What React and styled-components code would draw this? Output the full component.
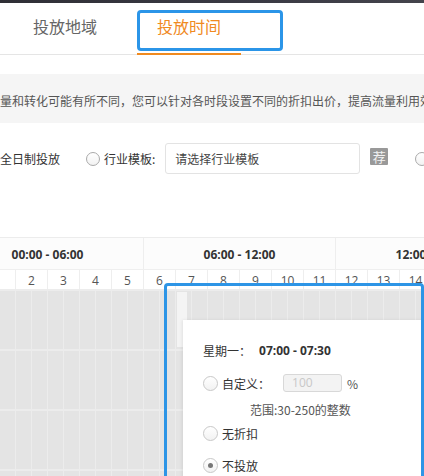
import React from "react";
import styled, { createGlobalStyle } from "styled-components";

const Global = createGlobalStyle`
  html, body { margin: 0; padding: 0; background: #fff; }
  body { width: 424px; height: 476px; overflow: hidden;
    font-family: "Noto Sans CJK SC", "Open Sans", sans-serif; color: #333; }
  * { box-sizing: border-box; }
`;

const Page = styled.div`
  position: relative;
  width: 424px;
  height: 476px;
  overflow: hidden;
`;

const TopStrip = styled.div`
  height: 3px;
  background: linear-gradient(90deg, #2f2f36 0%, #3a3a44 60%, #44444c 100%);
`;

const TabBar = styled.div`
  display: flex;
  align-items: stretch;
  gap: 20px;
  height: 52px;
  padding-left: 13px;
  border-bottom: 1px solid #e5e5e5;
`;

const Tab = styled.div`
  position: relative;
  display: flex;
  align-items: center;
  padding: 0 20px 5px;
  font-size: 16px;
  color: ${(p) => (p.$active ? "#f08a1f" : "#666")};
  border-bottom: 2px solid ${(p) => (p.$active ? "#f08a1f" : "transparent")};
  margin-bottom: -1px;
`;

const FocusRing = styled.div`
  position: absolute;
  left: 0;
  top: 7px;
  width: 146px;
  height: 41px;
  border: 3px solid #2b95e8;
  border-radius: 4px;
  pointer-events: none;
`;

const InfoBand = styled.div`
  margin-top: 19px;
  height: 49px;
  background: #f5f5f5;
  display: flex;
  align-items: center;
  padding-top: 4px;
  font-size: 12px;
  color: #555;
  white-space: nowrap;
  overflow: hidden;
`;

const OptionRow = styled.div`
  margin-top: 20px;
  height: 31px;
  display: flex;
  align-items: center;
  font-size: 12px;
  color: #333;
  white-space: nowrap;
`;

const OptLabel = styled.span`
  margin-right: ${(p) => p.$mr || 0}px;
`;

const Radio = styled.span`
  flex: none;
  position: relative;
  display: inline-block;
  width: ${(p) => (p.$light ? 15 : 14)}px;
  height: ${(p) => (p.$light ? 15 : 14)}px;
  border-radius: 50%;
  border: 1px solid ${(p) => (p.$light ? "#c8c8c8" : "#aaa")};
  background: linear-gradient(#fff, #f2f2f2);
  margin-right: 4px;
  &::after {
    content: "";
    display: ${(p) => (p.$checked ? "block" : "none")};
    position: absolute;
    left: 4px;
    top: 4px;
    width: 5px;
    height: 5px;
    border-radius: 50%;
    background: #777;
  }
`;

const SelectBox = styled.div`
  flex: none;
  width: 195px;
  height: 31px;
  margin-left: 10px;
  border: 1px solid #e3e3e3;
  border-radius: 3px;
  display: flex;
  align-items: center;
  padding-left: 9px;
  font-size: 12px;
  color: #444;
`;

const Badge = styled.span`
  flex: none;
  width: 18px;
  height: 17px;
  margin: -5px 27px 0 10px;
  background: #999;
  color: #f2f2f2;
  font-size: 13px;
  line-height: 17px;
  text-align: center;
  border-radius: 1px;
`;

const TableWrap = styled.div`
  margin-top: 63px;
  overflow: hidden;
  width: 424px;
`;

const Table = styled.div`
  width: 768px;
  margin-left: -49px;
  font-family: "Open Sans", "Noto Sans CJK SC", sans-serif;
`;

const GroupRow = styled.div`
  display: grid;
  grid-template-columns: repeat(4, 192px);
  height: 33px;
  border-top: 1px solid #ececec;
  border-bottom: 1px solid #efefef;
  background: #fcfcfc;
`;

const GroupCell = styled.div`
  display: flex;
  align-items: center;
  justify-content: center;
  padding-top: 1px;
  font-size: 12px;
  font-weight: 700;
  color: #333;
  border-left: 1px solid #eee;
`;

const HourRow = styled.div`
  display: grid;
  grid-template-columns: repeat(24, 32px);
  height: 19px;
  background: #fff;
`;

const HourCell = styled.div`
  display: flex;
  align-items: center;
  justify-content: center;
  font-size: 12px;
  color: #555;
  border-left: 1px solid #eee;
  padding-top: 1px;
  visibility: ${(p) => (p.$hidden ? "hidden" : "visible")};
`;

const BodyRow = styled.div`
  display: grid;
  grid-template-columns: repeat(48, 16px);
  height: 60px;
  background: #e4e4e4;
  border-top: 2px solid #ececec;
`;

const HalfCell = styled.div`
  border-left: 1px solid #ececec;
`;

const Highlight = styled.div`
  position: absolute;
  left: 164px;
  top: 283px;
  width: 260px;
  height: 220px;
  border: 3px solid #2d95e6;
  border-radius: 4px;
  pointer-events: none;
  z-index: 3;
`;

const Marker = styled.div`
  position: absolute;
  left: 177px;
  top: 292px;
  width: 10px;
  height: 55px;
  background: #f4f4f4;
  z-index: 1;
`;

const Popover = styled.div`
  position: absolute;
  left: 183px;
  top: 320px;
  width: 245px;
  height: 170px;
  background: #fff;
  box-shadow: -1px 0 3px rgba(0, 0, 0, 0.08);
  padding: 21px 0 0 20px;
  z-index: 2;
  font-size: 12px;
  color: #333;
`;

const PopLine = styled.div`
  display: flex;
  align-items: center;
  height: ${(p) => p.$h || 20}px;
  margin-top: ${(p) => p.$mt || 0}px;
  padding-left: ${(p) => p.$pl || 0}px;
  white-space: nowrap;
  color: ${(p) => (p.$muted ? "#555" : "#333")};
`;

const TimeText = styled.span`
  margin-left: 8px;
  font-family: "Open Sans", sans-serif;
  font-weight: 700;
  font-size: 12px;
`;

const NumInput = styled.span`
  width: 59px;
  height: 18px;
  margin-left: 13px;
  border: 1px solid #d8d8d8;
  border-radius: 3px;
  background: #f3f3f3;
  color: #c8c8c8;
  font-family: "Open Sans", sans-serif;
  font-size: 12px;
  line-height: 16px;
  padding-left: 8px;
`;

const Percent = styled.span`
  margin-left: 5px;
  color: #555;
`;

const groups = ["00:00 - 06:00", "06:00 - 12:00", "12:00 - 18:00", "18:00 - 24:00"];
const hours = Array.from({ length: 24 }, (_, i) => i);
const halves = Array.from({ length: 48 }, (_, i) => i);

export default function App() {
  return (
    <Page>
      <Global />
      <TopStrip />
      <TabBar>
        <Tab>投放地域</Tab>
        <Tab $active>
          投放时间
          <FocusRing />
        </Tab>
      </TabBar>
      <InfoBand>
        量和转化可能有所不同，您可以针对各时段设置不同的折扣出价，提高流量利用效率。
      </InfoBand>
      <OptionRow>
        <OptLabel $mr={26}>全日制投放</OptLabel>
        <Radio />
        <OptLabel>行业模板:</OptLabel>
        <SelectBox>请选择行业模板</SelectBox>
        <Badge>荐</Badge>
        <Radio />
      </OptionRow>
      <TableWrap>
        <Table>
          <GroupRow>
            {groups.map((g) => (
              <GroupCell key={g}>{g}</GroupCell>
            ))}
          </GroupRow>
          <HourRow>
            {hours.map((h) => (
              <HourCell key={h} $hidden={h < 2}>{h}</HourCell>
            ))}
          </HourRow>
          {[0, 1, 2, 3].map((r) => (
            <BodyRow key={r}>
              {halves.map((c) => (
                <HalfCell key={c} />
              ))}
            </BodyRow>
          ))}
        </Table>
      </TableWrap>
      <Marker />
      <Popover>
        <PopLine $h={18}>
          星期一：<TimeText>07:00 - 07:30</TimeText>
        </PopLine>
        <PopLine $h={20} $mt={14}>
          <Radio $light />
          <span>自定义：</span>
          <NumInput>100</NumInput>
          <Percent>%</Percent>
        </PopLine>
        <PopLine $h={18} $mt={7} $pl={47} $muted>
          范围:30-250的整数
        </PopLine>
        <PopLine $h={20} $mt={5}>
          <Radio $light />
          <span>无折扣</span>
        </PopLine>
        <PopLine $h={20} $mt={12}>
          <Radio $light $checked />
          <span>不投放</span>
        </PopLine>
      </Popover>
      <Highlight />
    </Page>
  );
}
